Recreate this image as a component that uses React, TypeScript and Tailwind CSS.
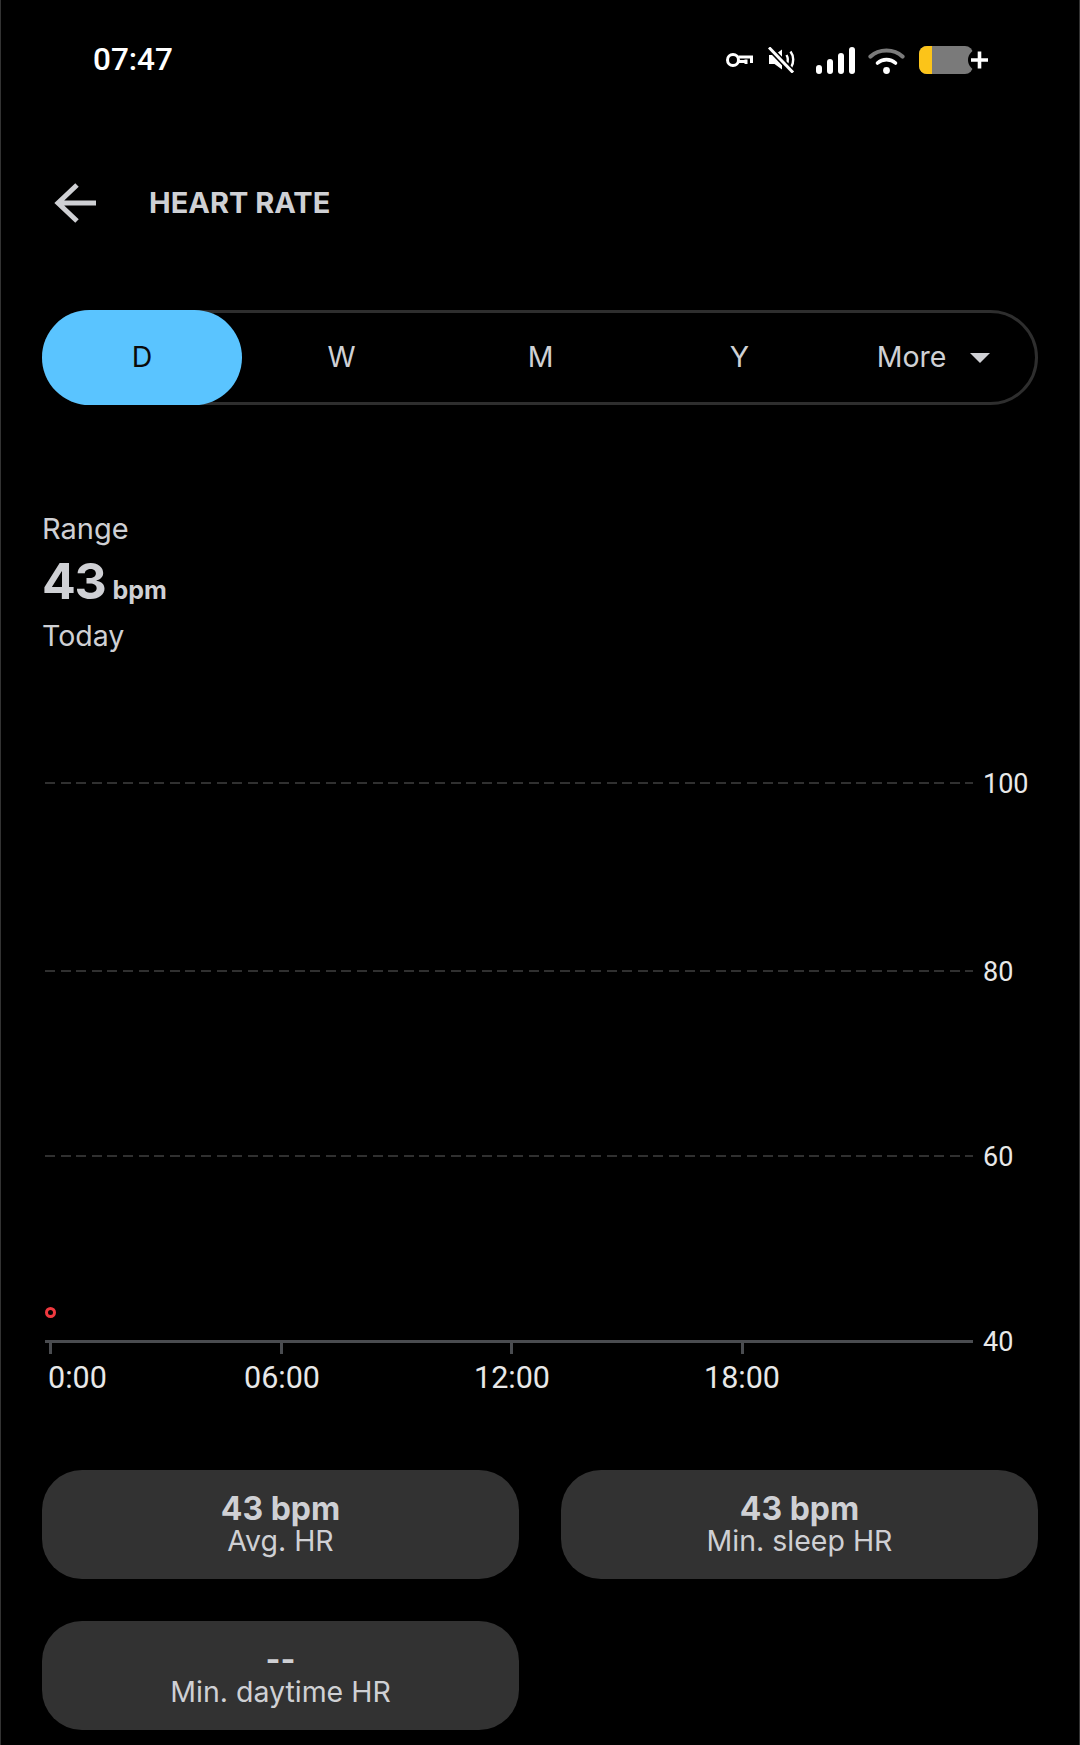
const hours = ["06:00", "12:00", "18:00"];

const KeyIcon = () => (
  <svg width="27" height="16" viewBox="0 0 27 16" fill="none" stroke="#fff" strokeWidth="3">
    <circle cx="7" cy="8" r="5.500" />
    <path d="M12.500 5H25.500V11M20 7.500V12" />
    <path d="M12.500 9.500H20" />
  </svg>
);

const MuteIcon = () => (
  <svg width="27" height="26" viewBox="0 0 27 26" fill="none">
    <path d="M1 8H6.500L14 2.500V22.500L6.500 17H1Z" fill="#fff" />
    <path d="M18.500 8C20 10.500 20 14 19 16.500M22.500 4.500C26 9 26 16 23 20.500" stroke="#fff" strokeWidth="2.400" />
    <path d="M1 0.500L25 25.500" stroke="#000" strokeWidth="6" />
    <path d="M1 0.500L25 25.500" stroke="#fff" strokeWidth="3" />
  </svg>
);

const SignalIcon = () => (
  <div className="flex items-end gap-[5px] h-[27px]">
    <div className="w-[6px] h-[9px] rounded-full bg-white" />
    <div className="w-[6px] h-[15px] rounded-full bg-white" />
    <div className="w-[6px] h-[21px] rounded-full bg-white" />
    <div className="w-[6px] h-[27px] rounded-full bg-white" />
  </div>
);

const WifiIcon = () => (
  <svg width="37" height="27" viewBox="0 0 37 27" fill="none" strokeLinecap="round">
    <path d="M2.500 9.500C11 1.500 26 1.500 34.500 9.500" stroke="#7b7b7b" strokeWidth="4.200" />
    <path d="M9.500 16C14.500 11.500 22.500 11.500 27.500 16" stroke="#fff" strokeWidth="3.600" />
    <circle cx="18.500" cy="23.500" r="3.400" fill="#fff" />
  </svg>
);

const BatteryIcon = () => (
  <svg width="69" height="28" viewBox="0 0 69 28" fill="none">
    <rect x="0" y="0" width="54" height="28" rx="8" fill="#7a7a7a" />
    <path d="M8 0H13V28H8A8 8 0 0 1 0 20V8A8 8 0 0 1 8 0Z" fill="#fcc419" />
    <circle cx="60" cy="14" r="11" fill="#000" />
    <path d="M52 14H69M60.500 5.500V22.500" stroke="#fff" strokeWidth="3.600" />
  </svg>
);

const Tab = ({ label }: { label: string }) => (
  <div className="w-[199px] shrink-0 flex items-center justify-center text-[#cfd0d4]">{label}</div>
);

const GridRow = ({ value, solid }: { value: string; solid?: boolean }) => (
  <div className="flex items-center h-[2px]">
    {solid ? (
      <div className="w-[928px] h-[3px] bg-[#4a4c50]" />
    ) : (
      <div className="w-[928px] h-[2px] bg-[repeating-linear-gradient(90deg,#303030_0_10px,transparent_10px_15.6px)]" />
    )}
    <span className="ml-[10px] mt-[3px] font-['Roboto',sans-serif] text-[27px] leading-none text-[#e8e8e8]">{value}</span>
  </div>
);

const StatCard = ({ value, label }: { value: string; label: string }) => (
  <div className="h-[109px] rounded-[40px] bg-[#323232] flex flex-col items-center justify-center text-[#cfd0d4]">
    <div className="text-[32px] leading-[32px] font-bold">{value}</div>
    <div className="text-[28.500px] leading-[32px]">{label}</div>
  </div>
);

export default function App() {
  return (
    <div className="w-[1080px] h-[1745px] overflow-hidden bg-black border-x border-[#333] font-['Inter',sans-serif]">
      <div className="h-[120px] flex items-center justify-between pl-[92px] pr-[91px]">
        <div className="font-['Roboto',sans-serif] text-[31.500px] font-medium text-white">07:47</div>
        <div className="flex items-center">
          <KeyIcon />
          <div className="ml-[15px]"><MuteIcon /></div>
          <div className="ml-[21px]"><SignalIcon /></div>
          <div className="ml-[13px]"><WifiIcon /></div>
          <div className="ml-[14px]"><BatteryIcon /></div>
        </div>
      </div>

      <div className="h-[166px] flex items-center pl-[53px]">
        <svg width="43" height="42" viewBox="0 0 43 42" fill="none" stroke="#cfd0d4" strokeWidth="5">
          <path d="M42 21H5M23 3L4 21L23 39" />
        </svg>
        <div className="ml-[52px] text-[29px] font-bold text-[#cfd0d4]">HEART RATE</div>
      </div>

      <div className="mt-[24px] mx-[41px] h-[95px] flex rounded-full border-[3px] border-[#2e2e2e] text-[28.500px]">
        <div className="w-[200px] shrink-0 -m-[3px] mr-0 rounded-full bg-[#5ac4ff] text-[#0a0a0a] flex items-center justify-center">D</div>
        <Tab label="W" />
        <Tab label="M" />
        <Tab label="Y" />
        <div className="flex-1 flex items-center justify-center pr-[7px] text-[#cfd0d4]">
          More
          <div className="ml-[24px] w-0 h-0 border-x-[10px] border-x-transparent border-t-[10px] border-t-[#cfd0d4]" />
        </div>
      </div>

      <div className="mt-[106px] pl-[41px] text-[#cfd0d4]">
        <div className="text-[29px] leading-[36px]">Range</div>
        <div className="h-[68px] flex items-baseline font-bold">
          <span className="text-[50px] leading-[68px] tracking-tight">43</span>
          <span className="ml-[7px] text-[25px]">bpm</span>
        </div>
        <div className="mt-[3px] text-[28.500px] leading-[36px]">Today</div>
      </div>

      <div className="relative mt-[128px] pl-[44px]">
        <div className="flex flex-col">
          <GridRow value="100" />
          <div className="mt-[186px]"><GridRow value="80" /></div>
          <div className="mt-[183px]"><GridRow value="60" /></div>
          <div className="mt-[183px]"><GridRow value="40" solid /></div>
        </div>
        {/* red reading sits over the grid */}
        <div className="absolute left-[44px] top-[525px] w-[11px] h-[11px] rounded-full border-[3px] border-[#f0393f]" />

        <div className="flex pl-[4px]">
          <div className="w-[231px] h-[12px] flex"><div className="w-[3px] bg-[#4a4c50]" /></div>
          <div className="w-[230px] h-[12px] flex"><div className="w-[3px] bg-[#4a4c50]" /></div>
          <div className="w-[231px] h-[12px] flex"><div className="w-[3px] bg-[#4a4c50]" /></div>
          <div className="w-[231px] h-[12px] flex"><div className="w-[3px] bg-[#4a4c50]" /></div>
        </div>
        <div className="mt-[6px] flex pl-[3px] font-['Roboto',sans-serif] text-[30.500px] leading-[36px] text-[#e8e8e8]">
          <div className="w-[234px]">0:00</div>
          {hours.map((hour) => (
            <div key={hour} className="w-[230px]">
              <span className="inline-block -translate-x-1/2">{hour}</span>
            </div>
          ))}
        </div>
      </div>

      <div className="mt-[74px] mx-[41px] grid grid-cols-2 gap-x-[42px] gap-y-[42px]">
        <StatCard value="43 bpm" label="Avg. HR" />
        <StatCard value="43 bpm" label="Min. sleep HR" />
        <StatCard value="--" label="Min. daytime HR" />
      </div>
    </div>
  );
}
